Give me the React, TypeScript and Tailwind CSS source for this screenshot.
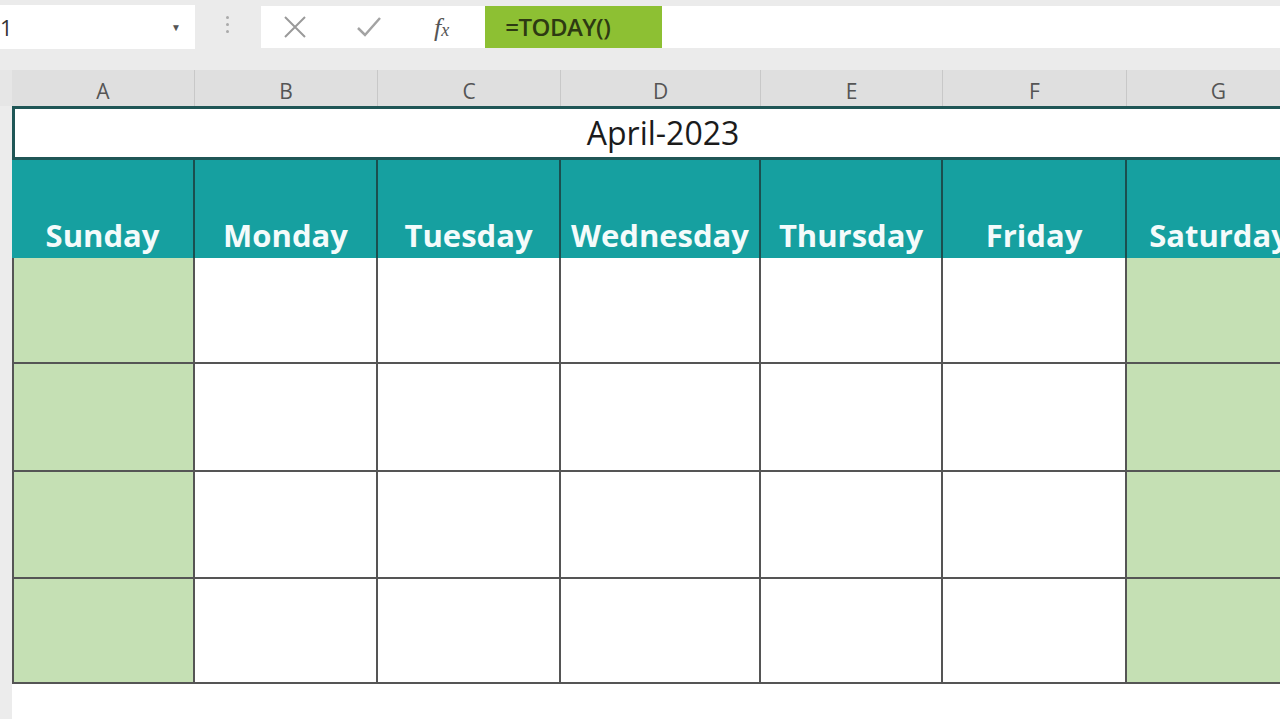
import React from "react";

const cols = ["A", "B", "C", "D", "E", "F", "G"];
const days = ["Sunday", "Monday", "Tuesday", "Wednesday", "Thursday", "Friday", "Saturday"];
const rowHeights = ["h-[106px]", "h-[108px]", "h-[107px]", "h-[105px]"];

// column G runs past the window edge, as in the sheet
const grid = "grid grid-cols-[12px_183px_183px_183px_200px_182px_184px_184px]";

const FormulaBar = () => (
  <div className="relative h-[70px] bg-[#ebebeb]">
    <div className="absolute left-0 top-[5px] flex h-[44px] w-[195px] items-center justify-between bg-white pr-[14px]">
      <span className="ml-0 text-[22px] text-[#333]">1</span>
      <span className="text-[10px] text-[#555]">▼</span>
    </div>
    <div className="absolute left-[226px] top-[16px] flex flex-col gap-[4px]">
      <span className="h-[3px] w-[3px] rounded-full bg-[#aaa]" />
      <span className="h-[3px] w-[3px] rounded-full bg-[#aaa]" />
      <span className="h-[3px] w-[3px] rounded-full bg-[#aaa]" />
    </div>
    <div className="absolute left-[261px] right-0 top-[6px] flex h-[42px] items-center bg-white">
      <svg width="24" height="24" viewBox="0 0 24 24" className="ml-[22px]">
        <path d="M2 2 L22 22 M22 2 L2 22" stroke="#9a9a9a" strokeWidth="2" />
      </svg>
      <svg width="26" height="24" viewBox="0 0 26 24" className="ml-[49px]">
        <path d="M2 13 L9 20 L24 3" stroke="#a3a3a3" strokeWidth="2.5" fill="none" />
      </svg>
      <span className="ml-[52px] font-['Liberation_Serif'] text-[26px] italic text-[#555]">
        f<span className="text-[18px]">x</span>
      </span>
      <div className="ml-[36px] flex h-full w-[177px] items-center bg-[#8dc033] pl-[20px] text-[24px] font-semibold tracking-[-0.5px] text-[#2d3a12]">
        =TODAY()
      </div>
    </div>
  </div>
);

export default function App() {
  return (
    <div className="h-[719px] w-[1280px] overflow-hidden bg-white font-['Open_Sans',sans-serif]">
      <FormulaBar />

      <div className={`${grid} h-[36px] bg-[#dfdfdf]`}>
        <div className="bg-[#e6e6e6]" />
        {cols.map((c) => (
          <div
            key={c}
            className="flex items-end justify-center border-r border-[#c8c8c8] pb-0 text-[21px] leading-[30px] text-[#555]"
          >
            {c}
          </div>
        ))}
      </div>

      <div className={`${grid} h-[54px]`}>
        <div className="bg-[#ececec]" />
        <div className="col-span-7 flex items-center justify-center border-y-[3px] border-l-[3px] border-[#1f5656] text-[32px] text-[#1b1b1b]">
          April-2023
        </div>
      </div>

      <div className={`${grid} h-[98px]`}>
        <div className="bg-[#ececec]" />
        {days.map((d, i) => (
          <div
            key={d}
            className={`flex items-end justify-center overflow-hidden whitespace-nowrap bg-[#16a0a0] pb-0 text-[31px] font-bold text-[#f4fbfb] ${
              i < 6 ? "border-r-2 border-[#1b4f4f]" : ""
            }`}
          >
            {d}
          </div>
        ))}
      </div>

      {rowHeights.map((h, r) => (
        <div key={r} className={`${grid} ${h}`}>
          <div className="bg-[#ececec]" />
          {days.map((d, i) => (
            <div
              key={d}
              className={`border-b-2 border-[#555] ${i < 6 ? "border-r-2" : ""} ${i === 0 ? "border-l-2" : ""} ${
                i === 0 || i === 6 ? "bg-[#c5e0b4]" : "bg-white"
              }`}
            />
          ))}
        </div>
      ))}

      <div className={`${grid} h-[40px]`}>
        <div className="bg-[#ececec]" />
      </div>
    </div>
  );
}
